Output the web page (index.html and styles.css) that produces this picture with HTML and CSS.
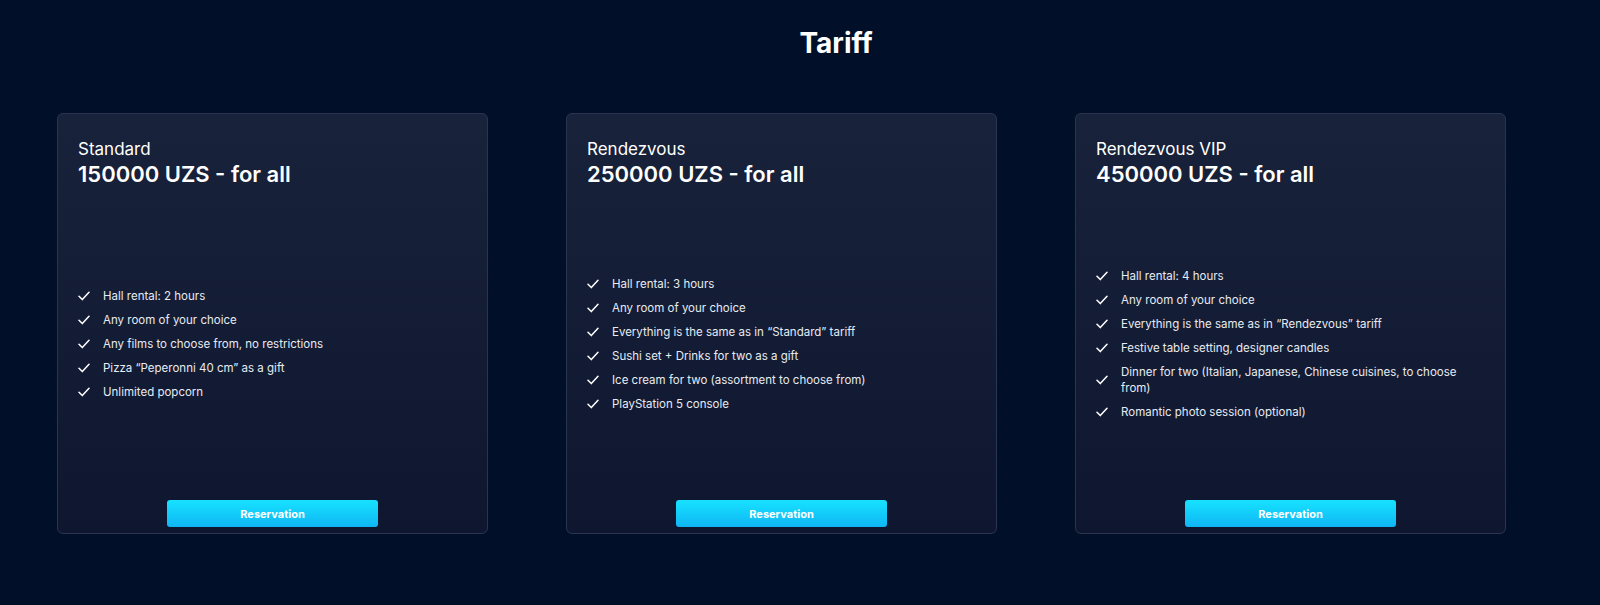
FILE: index.html
```html
<!DOCTYPE html>
<html>
<head>
<meta charset="utf-8">
<link rel="stylesheet" href="styles.css">
</head>
<body>
<section class="tariffs">
  <h1 class="title">Tariff</h1>
  <div class="cards">
    <div class="card">
      <div class="card-head">
        <div class="name">Standard</div>
        <div class="price">150000 UZS - for all</div>
      </div>
      <div class="card-body">
        <ul class="list">
          <li><svg class="check" viewBox="0 0 12 10"><path d="M1 5.2 L4.3 8.6 L11 1.2"/></svg><span>Hall rental: 2 hours</span></li>
          <li><svg class="check" viewBox="0 0 12 10"><path d="M1 5.2 L4.3 8.6 L11 1.2"/></svg><span>Any room of your choice</span></li>
          <li><svg class="check" viewBox="0 0 12 10"><path d="M1 5.2 L4.3 8.6 L11 1.2"/></svg><span>Any films to choose from, no restrictions</span></li>
          <li><svg class="check" viewBox="0 0 12 10"><path d="M1 5.2 L4.3 8.6 L11 1.2"/></svg><span>Pizza “Peperonni 40 cm” as a gift</span></li>
          <li><svg class="check" viewBox="0 0 12 10"><path d="M1 5.2 L4.3 8.6 L11 1.2"/></svg><span>Unlimited popcorn</span></li>
        </ul>
      </div>
      <button class="btn">Reservation</button>
    </div>
    <div class="card">
      <div class="card-head">
        <div class="name">Rendezvous</div>
        <div class="price">250000 UZS - for all</div>
      </div>
      <div class="card-body">
        <ul class="list">
          <li><svg class="check" viewBox="0 0 12 10"><path d="M1 5.2 L4.3 8.6 L11 1.2"/></svg><span>Hall rental: 3 hours</span></li>
          <li><svg class="check" viewBox="0 0 12 10"><path d="M1 5.2 L4.3 8.6 L11 1.2"/></svg><span>Any room of your choice</span></li>
          <li><svg class="check" viewBox="0 0 12 10"><path d="M1 5.2 L4.3 8.6 L11 1.2"/></svg><span>Everything is the same as in “Standard” tariff</span></li>
          <li><svg class="check" viewBox="0 0 12 10"><path d="M1 5.2 L4.3 8.6 L11 1.2"/></svg><span>Sushi set + Drinks for two as a gift</span></li>
          <li><svg class="check" viewBox="0 0 12 10"><path d="M1 5.2 L4.3 8.6 L11 1.2"/></svg><span>Ice cream for two (assortment to choose from)</span></li>
          <li><svg class="check" viewBox="0 0 12 10"><path d="M1 5.2 L4.3 8.6 L11 1.2"/></svg><span>PlayStation 5 console</span></li>
        </ul>
      </div>
      <button class="btn">Reservation</button>
    </div>
    <div class="card">
      <div class="card-head">
        <div class="name">Rendezvous VIP</div>
        <div class="price">450000 UZS - for all</div>
      </div>
      <div class="card-body">
        <ul class="list">
          <li><svg class="check" viewBox="0 0 12 10"><path d="M1 5.2 L4.3 8.6 L11 1.2"/></svg><span>Hall rental: 4 hours</span></li>
          <li><svg class="check" viewBox="0 0 12 10"><path d="M1 5.2 L4.3 8.6 L11 1.2"/></svg><span>Any room of your choice</span></li>
          <li><svg class="check" viewBox="0 0 12 10"><path d="M1 5.2 L4.3 8.6 L11 1.2"/></svg><span>Everything is the same as in “Rendezvous” tariff</span></li>
          <li><svg class="check" viewBox="0 0 12 10"><path d="M1 5.2 L4.3 8.6 L11 1.2"/></svg><span>Festive table setting, designer candles</span></li>
          <li><svg class="check" viewBox="0 0 12 10"><path d="M1 5.2 L4.3 8.6 L11 1.2"/></svg><span>Dinner for two (Italian, Japanese, Chinese cuisines, to choose from)</span></li>
          <li><svg class="check" viewBox="0 0 12 10"><path d="M1 5.2 L4.3 8.6 L11 1.2"/></svg><span>Romantic photo session (optional)</span></li>
        </ul>
      </div>
      <button class="btn">Reservation</button>
    </div>
  </div>
</section>
</body>
</html>
```

FILE: styles.css
```css
html, body {
  margin: 0;
  padding: 0;
  background: #010f29;
  height: 100%;
}
body {
  font-family: Inter, "Noto Sans", sans-serif;
  color: #ffffff;
}
.tariffs {
  padding-top: 26px;
}
.title {
  margin: 0;
  padding-left: 72px;
  text-align: center;
  font-size: 28px;
  line-height: 34px;
  font-weight: 700;
}
.cards {
  display: flex;
  gap: 78px;
  padding-left: 57px;
  margin-top: 53px;
}
.card {
  box-sizing: border-box;
  width: 431px;
  height: 421px;
  border: 1px solid #2a3450;
  border-radius: 6px;
  background: linear-gradient(180deg, #18223a 0%, #0e172f 100%);
  display: flex;
  flex-direction: column;
  padding: 24px 20px 6px 20px;
}
.name {
  font-size: 17px;
  line-height: 22px;
  font-weight: 400;
}
.price {
  font-size: 22px;
  line-height: 28px;
  font-weight: 600;
}
.card-body {
  flex: 1;
  display: flex;
  align-items: center;
  padding-right: 24px;
}
.list {
  list-style: none;
  margin: 0;
  padding: 0;
  display: flex;
  flex-direction: column;
  gap: 8px;
}
.list li {
  display: flex;
  align-items: center;
  gap: 13px;
  font-size: 11.5px;
  line-height: 16px;
  color: #e8ebf2;
}
.check {
  flex: none;
  width: 12px;
  height: 10px;
  fill: none;
  stroke: #ffffff;
  stroke-width: 1.5;
  stroke-linecap: round;
  stroke-linejoin: round;
}
.btn {
  align-self: center;
  width: 211px;
  height: 27px;
  border: 0;
  border-radius: 3px;
  background: linear-gradient(180deg, #17e2ff 0%, #0fb6f4 100%);
  color: #ffffff;
  font-family: inherit;
  font-size: 11px;
  font-weight: 700;
  cursor: pointer;
}
```
